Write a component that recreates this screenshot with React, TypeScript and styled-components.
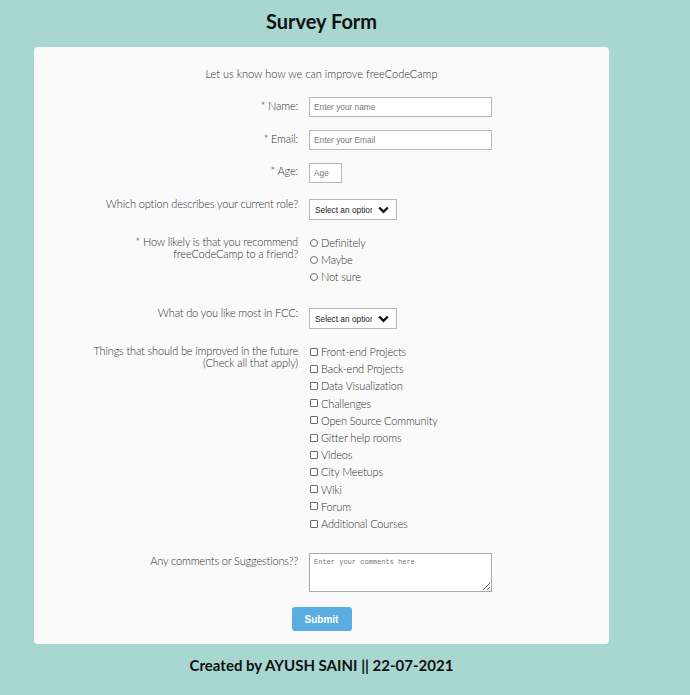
import React from "react";
import styled, { createGlobalStyle } from "styled-components";

const GlobalStyle = createGlobalStyle`
  html, body {
    margin: 0;
    padding: 0;
    background-color: #a8d7d2;
  }
  body {
    font-family: "Lato", "Open Sans", sans-serif;
  }
`;

const Page = styled.div`
  width: 643px;
  padding-top: 9px;
`;
const Title = styled.h1`
  margin: 0 0 13px;
  text-align: center;
  font-size: 20px;
  line-height: 25px;
  font-weight: 700;
  color: #111;
`;
const Card = styled.form`
  margin: 0 auto;
  width: 575px;
  box-sizing: border-box;
  padding: 21px 0 13px;
  background-color: #fafafa;
  border-radius: 4px;
`;
const Intro = styled.p`
  margin: 0 0 17px;
  text-align: center;
  font-size: 11px;
  line-height: 12px;
  font-weight: 300;
  color: #2a2a2a;
`;
const Row = styled.div<{ $gap: number }>`
  display: grid;
  grid-template-columns: 264px 1fr;
  column-gap: 11px;
  align-items: start;
  margin-bottom: ${(p) => p.$gap}px;
`;
const Label = styled.label<{ $offset?: number }>`
  display: block;
  margin-top: ${(p) => p.$offset ?? 0}px;
  text-align: right;
  font-size: 11px;
  line-height: 12px;
  font-weight: 300;
  letter-spacing: -0.15px;
  color: #2e2e2e;
`;
const TextInput = styled.input<{ $width: number }>`
  display: block;
  box-sizing: border-box;
  width: ${(p) => p.$width}px;
  height: 20px;
  margin: 0;
  padding: 0 4px;
  border: 1px solid #b8b8b8;
  background: #fff;
  font-family: "Liberation Sans", Arial, sans-serif;
  font-size: 8.3px;
  color: #333;
  &::placeholder {
    color: #777;
  }
`;
const SelectWrap = styled.div`
  position: relative;
  width: 88px;
  height: 21px;
`;
const Select = styled.select`
  appearance: none;
  display: block;
  box-sizing: border-box;
  width: 100%;
  height: 100%;
  margin: 0;
  padding: 0 24px 0 5px;
  border: 1px solid #b8b8b8;
  border-radius: 0;
  background: #fff;
  font-family: "Liberation Sans", Arial, sans-serif;
  font-size: 8.3px;
  color: #222;
  overflow: hidden;
  white-space: nowrap;
`;
const Chevron = styled.svg`
  position: absolute;
  right: 8px;
  top: 7px;
  pointer-events: none;
`;
const Options = styled.div<{ $line: number }>`
  display: flex;
  flex-direction: column;
  font-size: 11px;
  line-height: ${(p) => p.$line}px;
  font-weight: 300;
  letter-spacing: -0.15px;
  color: #2e2e2e;
`;
const Option = styled.label`
  display: flex;
  align-items: center;
  gap: 3px;
  white-space: nowrap;
`;
const Mark = styled.input<{ $round?: boolean }>`
  appearance: none;
  box-sizing: border-box;
  width: 8px;
  height: 8px;
  margin: 0 0 0 1px;
  border: 1px solid #6b6b6b;
  border-radius: ${(p) => (p.$round ? "50%" : "1px")};
  background: #fff;
`;
const Comments = styled.textarea`
  display: block;
  box-sizing: border-box;
  width: 183px;
  height: 39px;
  margin: 0;
  padding: 4px 4px;
  border: 1px solid #a9a9a9;
  background: #fff;
  font-family: "Liberation Mono", "DejaVu Sans Mono", monospace;
  font-size: 7px;
  &::placeholder {
    color: #777;
  }
`;
const Actions = styled.div`
  display: flex;
  justify-content: center;
`;
const SubmitButton = styled.button`
  width: 60px;
  height: 24px;
  border: none;
  border-radius: 3px;
  background-color: #5aade1;
  color: #fff;
  font-family: "Liberation Sans", Arial, sans-serif;
  font-size: 10px;
  font-weight: 700;
`;
const Footer = styled.p`
  margin: 11px 0 0;
  text-align: center;
  font-size: 15px;
  line-height: 20px;
  font-weight: 700;
  color: #111;
`;

const improvements = [
  "Front-end Projects",
  "Back-end Projects",
  "Data Visualization",
  "Challenges",
  "Open Source Community",
  "Gitter help rooms",
  "Videos",
  "City Meetups",
  "Wiki",
  "Forum",
  "Additional Courses",
];

const Dropdown = ({ id }: { id: string }) => (
  <SelectWrap>
    <Select id={id} defaultValue="">
      <option value="" disabled>
        Select an option
      </option>
      <option>Student</option>
      <option>Full time job</option>
      <option>Other</option>
    </Select>
    <Chevron width="11" height="8" viewBox="0 0 11 8">
      <path d="M1.2 1.5 L5.5 5.8 L9.8 1.5" fill="none" stroke="#111" strokeWidth="2.4" />
    </Chevron>
  </SelectWrap>
);

const App = () => {
  return (
    <>
      <GlobalStyle />
      <Page>
        <Title>Survey Form</Title>
        <Card onSubmit={(e) => e.preventDefault()}>
          <Intro>Let us know how we can improve freeCodeCamp</Intro>
          <Row $gap={13}>
            <Label htmlFor="name" $offset={3}>* Name:</Label>
            <TextInput id="name" $width={183} placeholder="Enter your name" />
          </Row>
          <Row $gap={13}>
            <Label htmlFor="email" $offset={3}>* Email:</Label>
            <TextInput id="email" $width={183} placeholder="Enter your Email" />
          </Row>
          <Row $gap={16}>
            <Label htmlFor="age" $offset={2}>* Age:</Label>
            <TextInput id="age" $width={33} placeholder="Age" />
          </Row>
          <Row $gap={14}>
            <Label htmlFor="role" $offset={-1}>Which option describes your current role?</Label>
            <Dropdown id="role" />
          </Row>
          <Row $gap={23}>
            <Label $offset={2}>
              * How likely is that you recommend
              <br />
              freeCodeCamp to a friend?
            </Label>
            <Options $line={17}>
              {["Definitely", "Maybe", "Not sure"].map((o) => (
                <Option key={o}>
                  <Mark type="radio" name="recommend" $round />
                  {o}
                </Option>
              ))}
            </Options>
          </Row>
          <Row $gap={14}>
            <Label htmlFor="fcc" $offset={-1}>What do you like most in FCC:</Label>
            <Dropdown id="fcc" />
          </Row>
          <Row $gap={21}>
            <Label $offset={2}>
              Things that should be improved in the future
              <br />
              (Check all that apply)
            </Label>
            <Options $line={17.2}>
              {improvements.map((o) => (
                <Option key={o}>
                  <Mark type="checkbox" />
                  {o}
                </Option>
              ))}
            </Options>
          </Row>
          <Row $gap={15}>
            <Label htmlFor="comments" $offset={2}>Any comments or Suggestions??</Label>
            <Comments id="comments" placeholder="Enter your comments here" />
          </Row>
          <Actions>
            <SubmitButton type="submit">Submit</SubmitButton>
          </Actions>
        </Card>
        <Footer>Created by AYUSH SAINI || 22-07-2021</Footer>
      </Page>
    </>
  );
};

export default App;
